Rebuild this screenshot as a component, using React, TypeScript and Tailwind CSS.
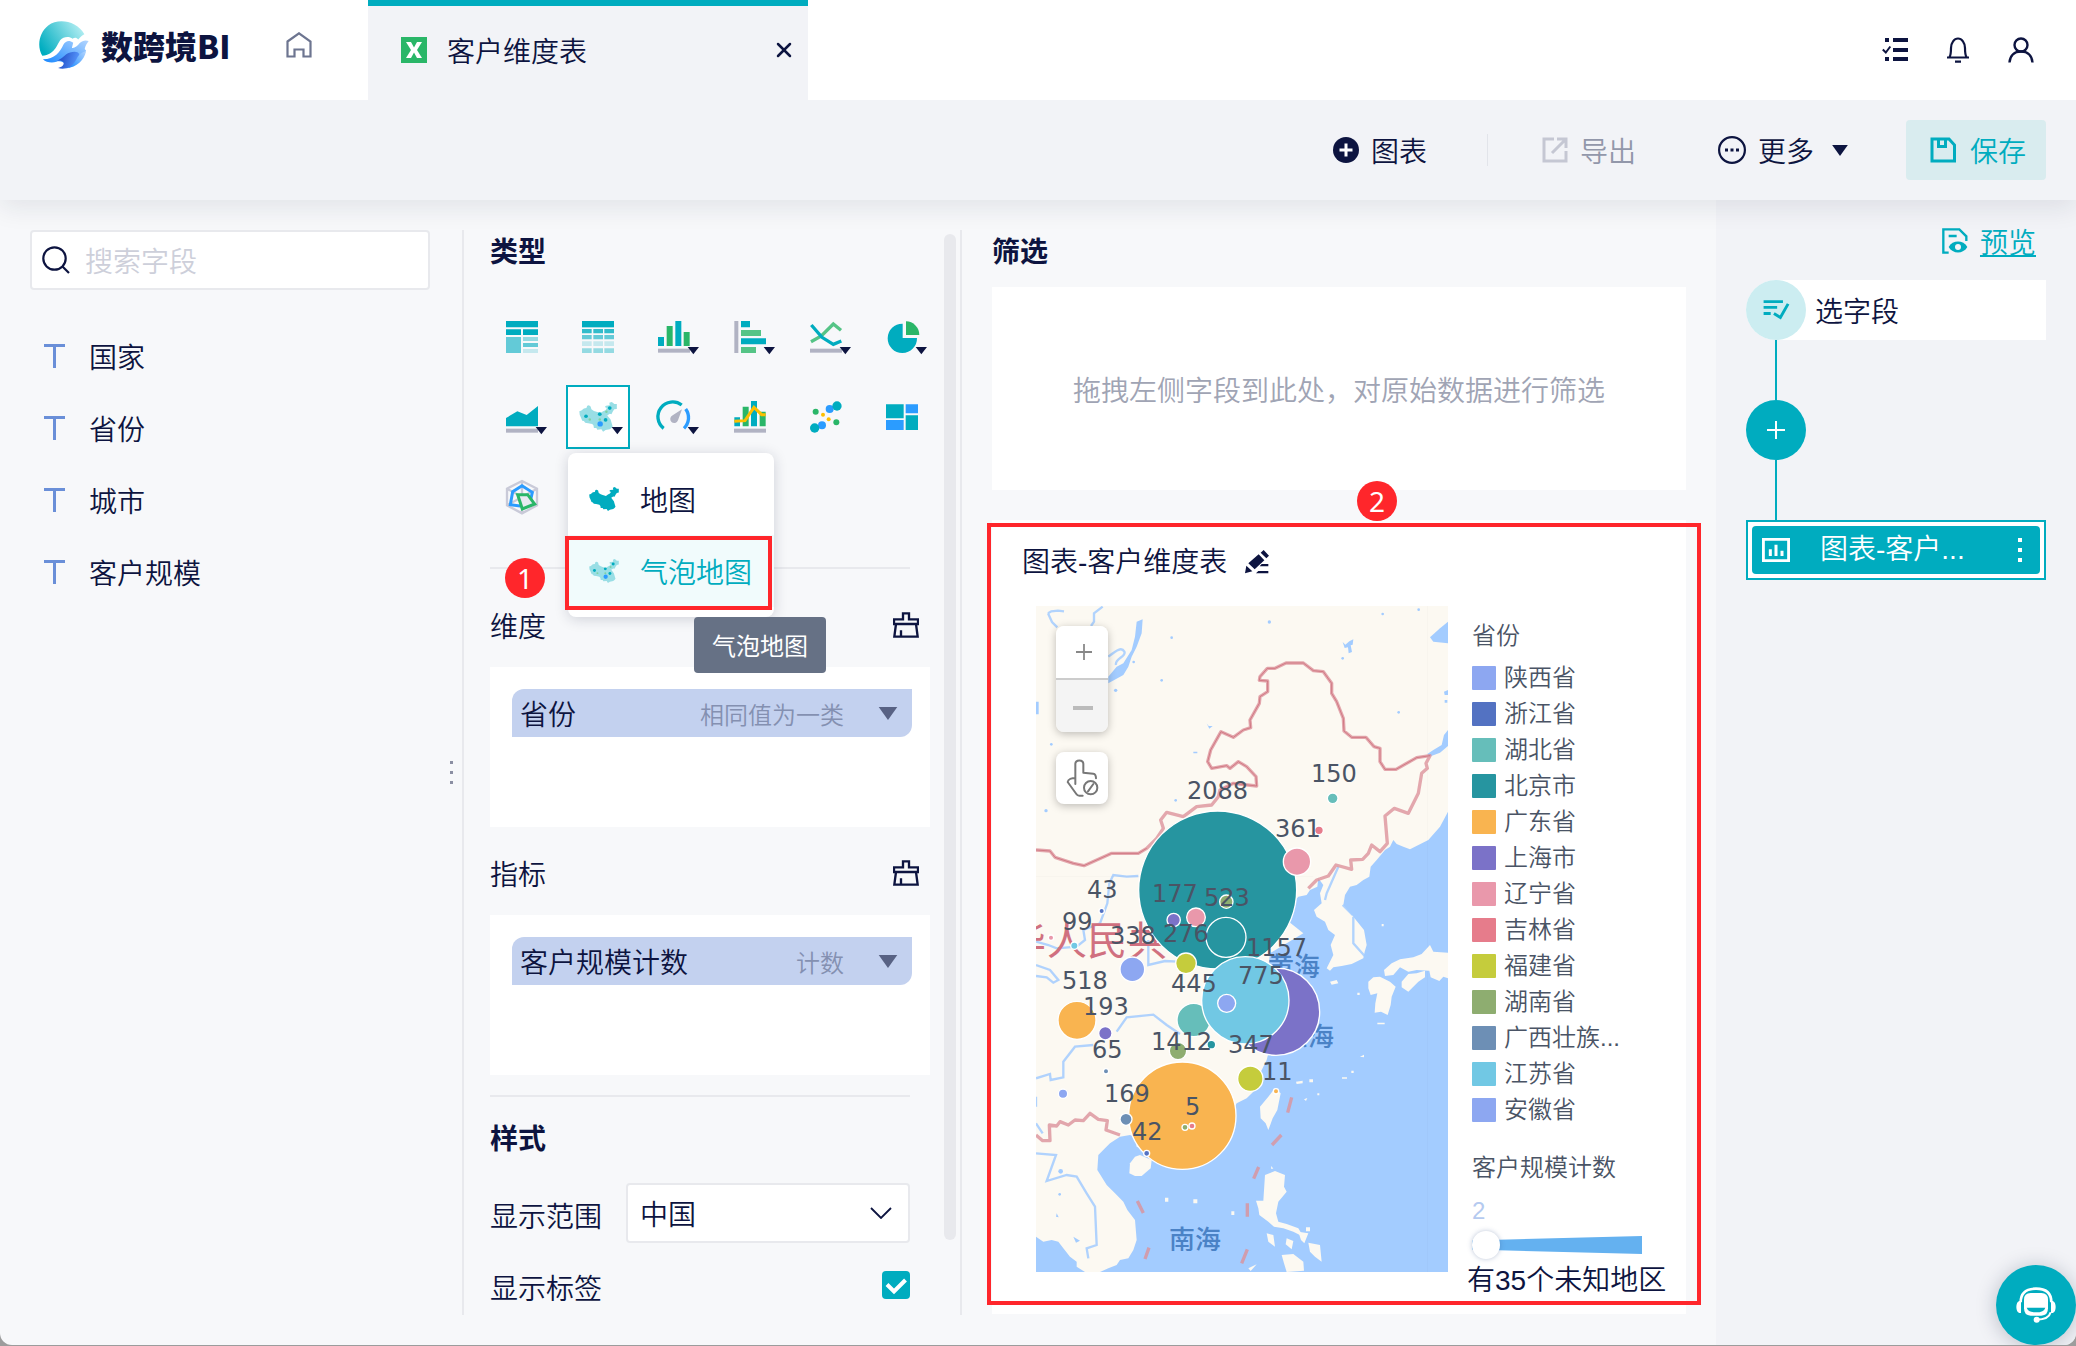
import React from 'react';
import { ChevronDown, X } from 'lucide-react';

const TEAL = '#00acbf';
const GREEN = '#2ab668';
const BLUE = '#2b9cff';
const GREY = '#b1b3c3';
const NAVY = '#0d1440';

function Logo() {
  return (
    <svg viewBox="0 0 152 146" className="h-12 w-[50px]" aria-hidden="true">
      <defs>
        <linearGradient id="globe" x1="0" y1="0.7" x2="1" y2="0.2">
          <stop offset="0" stopColor="#00adc0" />
          <stop offset="1" stopColor="#b9f0f4" />
        </linearGradient>
        <linearGradient id="wave" x1="0" y1="0.8" x2="1" y2="0">
          <stop offset="0" stopColor="#1f8bff" />
          <stop offset="1" stopColor="#b4d6ff" />
        </linearGradient>
        <linearGradient id="deep" x1="0" y1="0.4" x2="1" y2="0.6">
          <stop offset="0" stopColor="#1c45c0" />
          <stop offset="1" stopColor="#5a9bff" />
        </linearGradient>
      </defs>
      <path d="M10 106C-6 80-2 38 28 14 60-10 114 0 138 40c-8 4-13 9-19 16-4-6-11-7-17-2-8-8-28-8-37 4-12 16-16 44-55 48z" fill="url(#globe)" />
      <path d="M12 116c36 0 52-22 62-44 8-12 18-14 30-6l-4 16c8 2 16-6 24-15 8-8 18-10 27-6-6 8-10 14-12 24l4 5c-6 24-32 38-60 44-8-10-20-14-30-10-14 4-32 2-41-8z" fill="url(#wave)" />
      <path d="M82 102c14-10 36-12 40-2 6 16-12 38-38 44-10 2-18 2-26-1 12-2 20-10 16-18-4-6-14-6-20-4 12-4 20-12 28-19z" fill="url(#deep)" />
      <path d="M84 144c30-4 54-24 59-52-16 4-24 12-30 26-6 12-16 22-29 26z" fill="url(#wave)" />
    </svg>
  );
}

function HomeIcon() {
  return (
    <svg viewBox="0 0 26 26" className="size-[26px]" fill="none" stroke="#6d7590" strokeWidth="2.200" aria-hidden="true">
      <path d="M1.500 9.500 13 1.300l11.500 8.200V24.500h-7v-7h-9v7h-7z" />
    </svg>
  );
}

function TasksIcon() {
  return (
    <svg viewBox="0 0 26 26" className="size-[26px]" fill={NAVY} aria-hidden="true">
      <path d="M3 1h4v4H3zM3 20h4v4H3zM11 1h15v4H11zM11 11h15v4H11zM11 20h15v4H11z" />
      <path d="m.8 12.500 3 3 4.500-6" fill="none" stroke={NAVY} strokeWidth="2" />
    </svg>
  );
}

function BellIcon() {
  return (
    <svg viewBox="0 0 26 26" className="size-[26px]" fill="none" stroke={NAVY} strokeWidth="2.200" aria-hidden="true">
      <path d="M2 20.500h22M4.500 20c1.500-2 1.500-5 1.500-9a7 9.500 0 0 1 14 0c0 4 0 7 1.500 9M10 24.700h6" />
    </svg>
  );
}

function UserIcon() {
  return (
    <svg viewBox="0 0 26 26" className="size-[26px]" fill="none" stroke={NAVY} strokeWidth="2.400" aria-hidden="true">
      <circle cx="13" cy="8" r="6.500" />
      <path d="M1.500 25.500c.5-7 5-11 11.500-11s11 4 11.500 11" />
    </svg>
  );
}

function SheetIcon() {
  return (
    <svg viewBox="0 0 26 26" className="size-[26px]" aria-hidden="true">
      <rect width="26" height="26" fill={GREEN} />
      <path d="M5 5h5l3 5.500L16 5h5l-5 8 5 8h-5l-3-5.500L10 21H5l5-8z" fill="#fff" />
    </svg>
  );
}

function Caret({ className }: { className: string }) {
  return (
    <svg viewBox="0 0 20 14" className={className} fill="currentColor" aria-hidden="true">
      <path d="M0 0h20L10 14z" />
    </svg>
  );
}

const CHINA =
  'M0 23 5 21 11 16 17 15 19 9 23 8 27 11 29 18 35 22 41 24 51 27 57 23 63 20 66 15 61 12 64 9 73 8 72 2 78 0 84 5 90 5 90 17 84 18 81 22 77 30 73 29 67 33 71 38 75 43 77 50 80 60 77 64 73 67 63 69 57 73 53 67 43 68 41 64 35 64 34 58 31 54 21 52 14 51 11 47 7 46 3 36 1 32z';

function BubbleChina() {
  return (
    <>
      <path d={CHINA} fill="#99dee5" />
      <g fill={TEAL}>
        <circle cx="16" cy="35" r="4.500" />
        <circle cx="73" cy="15" r="4.500" />
        <circle cx="49" cy="30" r="4.500" />
        <circle cx="63" cy="44" r="4.500" />
      </g>
      <circle cx="50" cy="54" r="6.500" fill={BLUE} />
      <g fill="#7fd3a4">
        <circle cx="25" cy="43" r="3" />
        <circle cx="49" cy="43" r="3" />
        <circle cx="65" cy="24" r="3" />
      </g>
    </>
  );
}

const base = <rect x="48" y="131" width="96" height="12" fill={GREY} />;
const drop = <path d="M137 126h34l-17 22z" fill={NAVY} />;

const chartTypes: { name: string; art: React.ReactNode }[] = [
  {
    name: '明细表',
    art: (
      <g fill={TEAL}>
        <path d="M48 48h96v19H48zM48 73h45v17H48zM99 73h45v17H99z" />
        <path d="M48 96h45v48H48zM99 114h45v12H99z" opacity=".6" />
        <path d="M99 96h45v12H99z" opacity=".4" />
        <path d="M99 132h45v12H99z" opacity=".2" />
      </g>
    ),
  },
  {
    name: '汇总表',
    art: (
      <g fill={TEAL}>
        <path d="M48 48h96v19H48z" />
        <path d="M48 72h29v13H48zM82 72h29v13H82zM115 72h29v13h-29z" opacity=".8" />
        <path d="M48 90h29v13H48zM82 90h29v13H82zM115 90h29v13h-29z" opacity=".6" />
        <path d="M48 109h29v14H48zM82 109h29v14H82zM115 109h29v14h-29z" opacity=".2" />
        <path d="M48 130h29v14H48zM82 130h29v14H82zM115 130h29v14h-29z" opacity=".4" />
      </g>
    ),
  },
  {
    name: '柱状图',
    art: (
      <>
        <path d="M48 96h18v27H48zM100 48h18v75h-18z" fill={TEAL} />
        <path d="M74 63h18v60H74zM125 81h18v42h-18z" fill={GREEN} />
        {base}
        {drop}
      </>
    ),
  },
  {
    name: '条形图',
    art: (
      <>
        <path d="M49 48h12v96H49z" fill={GREY} />
        <path d="M69 48h27v19H69zM69 100h75v18H69z" fill={TEAL} />
        <path d="M69 75h60v18H69zM69 126h45v18H69z" fill="#55c486" />
        {drop}
      </>
    ),
  },
  {
    name: '折线图',
    art: (
      <>
        <g fill="none" strokeWidth="10">
          <path d="M51 110 82 93 118 57 141 76" stroke="#55c486" />
          <path d="M52 60 84 97 118 118 142 108" stroke={TEAL} />
        </g>
        {base}
        {drop}
      </>
    ),
  },
  {
    name: '饼图',
    art: (
      <>
        <path d="M98 56a44 44 0 1 0 43 43H98z" fill={TEAL} />
        <path d="M108 49v41h40a41 41 0 0 0-40-41z" fill={GREEN} />
        {drop}
      </>
    ),
  },
  {
    name: '面积图',
    art: (
      <>
        <path d="M48 124V99l34-20 28 11 34-27v61z" fill={TEAL} />
        {base}
        {drop}
      </>
    ),
  },
  {
    name: '地图',
    art: (
      <>
        <g transform="translate(40 51) scale(1.250 1.220)">
          <BubbleChina />
        </g>
        {drop}
      </>
    ),
  },
  {
    name: '仪表盘',
    art: (
      <>
        <g fill="none" strokeWidth="10">
          <path d="M65 130A44 44 0 0 1 119 60" stroke={TEAL} />
          <path d="M131 72A44 44 0 0 1 126 130" stroke={BLUE} />
        </g>
        <path d="M120 73 108 106a12 12 0 1 1-16-15z" fill={GREY} />
        {drop}
      </>
    ),
  },
  {
    name: '组合图',
    art: (
      <>
        <path d="M49 97h17v27H49zM99 48h18v76H99z" fill={TEAL} />
        <path d="M74 65h18v59H74zM125 80h18v44h-18z" fill={GREEN} />
        <path d="M49 109 81 107 108 67 131 89h12" fill="none" stroke="#fdbf00" strokeWidth="9" />
        {base}
      </>
    ),
  },
  {
    name: '散点图',
    art: (
      <>
        <g fill={GREEN}>
          <circle cx="65" cy="80" r="9" />
          <circle cx="127" cy="112" r="9" />
        </g>
        <g fill="#fdbf00">
          <circle cx="87" cy="89" r="6" />
          <circle cx="104" cy="103" r="6" />
        </g>
        <g fill={BLUE}>
          <circle cx="107" cy="72" r="12" />
          <circle cx="84" cy="121" r="12" />
        </g>
        <g fill={TEAL}>
          <circle cx="129" cy="63" r="14" />
          <circle cx="62" cy="129" r="14" />
        </g>
      </>
    ),
  },
  {
    name: '矩形树图',
    art: (
      <>
        <path d="M48 58h53v42H48zM107 91h37v44h-37z" fill={TEAL} />
        <path d="M107 58h37v27h-37zM48 105h53v30H48z" fill={BLUE} />
      </>
    ),
  },
  {
    name: '雷达图',
    art: (
      <g fill="none">
        <path d="M96 48 141 71v50L96 145 51 121V71zM51 71l90 50M141 71l-90 50M96 48v97" stroke="#c9cad8" strokeWidth="7" />
        <path d="M96 62 127 82 119 116 90 123 61 119 68 80z" stroke={BLUE} strokeWidth="9" />
        <path d="M83 89h30l21 28-37 15z" fill="#e9eaf2" stroke={GREEN} strokeWidth="9" />
      </g>
    ),
  },
];

function BroomIcon() {
  return (
    <svg viewBox="0 0 78 78" className="size-[26px]" fill="none" stroke={NAVY} strokeWidth="7" aria-hidden="true">
      <path d="M30 22V4h18v18h27v14H3V22zM3 36h72M9 36 4 74h70l-5-38M24 74V55" />
    </svg>
  );
}

function FieldZone({ title, name, rule }: { title: string; name: string; rule: string }) {
  return (
    <section>
      <div className="flex h-10 items-center justify-between pr-[11px]">
        <h3>{title}</h3>
        <button type="button" aria-label={`清空${title}`}>
          <BroomIcon />
        </button>
      </div>
      <div className="mt-[22px] h-40 bg-white px-[22px] pt-[22px]">
        <button
          type="button"
          className="flex h-12 w-[400px] items-center rounded-tl-xl rounded-br-xl bg-[#c3d1ef] pr-[14px] pl-2"
        >
          <span>{name}</span>
          <span className="ml-auto pt-[2px] text-2xl text-[#8490b1]">{rule}</span>
          <Caret className="ml-[34px] h-[13px] w-5 text-[#586284]" />
        </button>
      </div>
    </section>
  );
}

const bubbles: [number, number, number, string][] = [
  [593, 30, 237, '#2695a0'],
  [487, 707, 161, '#f9b450'],
  [768, 395, 131, '#7b72c8'],
  [521, 420, 50, '#66beba'],
  [676, 361, 131, '#71c8e4'],
  [618, 172, 60, '#2695a0'],
  [171, 421, 57, '#f9b450'],
  [831, -55, 41, '#e998ab'],
  [691, 596, 38, '#c5cc3c'],
  [337, 268, 37, '#8da7f1'],
  [498, 250, 31, '#c5cc3c'],
  [528, 112, 28, '#e998ab'],
  [620, 370, 27, '#8da7f1'],
  [474, 513, 26, '#8ead70'],
  [461, 120, 20, '#7b72c8'],
  [619, 65, 20, '#8ead70'],
  [256, 460, 20, '#7b72c8'],
  [318, 718, 18, '#6d8fb5'],
  [938, -245, 16, '#66beba'],
  [129, 641, 14, '#8da7f1'],
  [574, 494, 13, '#2695a0'],
  [897, -149, 13, '#e67c8b'],
  [163, 197, 11, '#71c8e4'],
  [245, 93, 8, '#5372c2'],
  [768, 634, 8, '#f9b450'],
  [93, 173, 8, '#e998ab'],
  [258, 574, 8, '#6d8fb5'],
  [380, 820, 9, '#5372c2'],
  [495, 742, 9, '#8ead70'],
  [516, 738, 9, '#e67c8b'],
];

const bubbleLabels: [number, number, string][] = [
  [151, 193, '2088'],
  [275, 176, '150'],
  [239, 231, '361'],
  [51, 292, '43'],
  [116, 296, '177'],
  [168, 300, '523'],
  [26, 324, '99'],
  [74, 338, '338'],
  [127, 336, '276'],
  [210, 350, '1157'],
  [202, 378, '775'],
  [26, 383, '518'],
  [47, 409, '193'],
  [135, 386, '445'],
  [115, 444, '1412'],
  [192, 447, '347'],
  [56, 452, '65'],
  [226, 474, '11'],
  [68, 496, '169'],
  [149, 509, '5'],
  [96, 534, '42'],
];

function BubbleMap() {
  return (
    <svg viewBox="0 0 412 666" preserveAspectRatio="xMidYMid slice" className="h-[666px] w-full font-normal" role="img" aria-label="气泡地图">
      <rect width="412" height="666" fill="#fcf9f2" />
      <g transform="scale(.333333) translate(-48 822)">
        <g fill="#a3ccff">
          <path d="M1284-205 1260-160 1225-120 1170-92 1150-100 1130-108 1120-120 1110-100 1095-90 1070-60 1052-40 1048-10 1030 0 1010 15 990 20 975 45 970 75 1000 110 1032 150 1040 195 1034 215 1030 235 995 252 965 258 940 262 930 272 920 265 940 225 932 195 945 165 925 150 915 125 890 110 882 90 905 70 900 40 910 15 895 -5 892 20 870 30 860 45 835 50 800 90 800 120 850 160 800 190 750 220 740 300 780 400 750 500 740 540 730 560 715 590 700 635 680 655 650 670 600 760 480 850 350 800 345 770 330 765 300 770 270 790 255 805 235 825 232 870 260 915 285 940 310 965 322 990 345 1020 350 1080 340 1110 325 1135 300 1140 290 1155 265 1165 240 1176H1284z" />
          <path d="M48 1070 70 1085 95 1080 115 1085 130 1105 150 1130 170 1145 170 1160 195 1176H48z" />
          <path d="M1284-775 1260-755 1230-728 1240-715 1284-710z" />
          <path d="M350-775 368-782 365-740 350-700 335-670 325-640 310-615 265-590 265-610 290-640 310-650 335-690 345-730z" />
          <path d="M1284-450 1272-435 1265-405 1240-390 1222-378 1228-370 1260-382 1284-402z" />
          <path d="M968-714 976-706 988-716 1000-722 998-706 992-704 996-684 986-680 984-698 974-696zM560-470 566-462 578-462 568-454zM520-385h12v5h-12zM48-535h8v38h-8zM1272-565l12-5v15h-10zM1274-540h8v8h-8zM110 1000l6 12-8-2zM160 1070l20 12-12 6z" />
          <g>
            <circle cx="455" cy="-727" r="4" />
            <circle cx="748" cy="-774" r="5" />
            <circle cx="1088" cy="-798" r="4" />
            <circle cx="1196" cy="-811" r="4" />
            <circle cx="425" cy="-599" r="4" />
            <circle cx="341" cy="-654" r="4" />
            <circle cx="287" cy="-569" r="5" />
            <circle cx="94" cy="-407" r="4" />
            <circle cx="78" cy="-208" r="5" />
            <circle cx="467" cy="-239" r="4" />
            <circle cx="1136" cy="-503" r="4" />
            <circle cx="968" cy="-665" r="4" />
            <circle cx="122" cy="874" r="7" />
            <circle cx="119" cy="943" r="4" />
          </g>
        </g>
        <g fill="none" stroke="#a3ccff" strokeWidth="7" opacity=".85">
          <path d="M248-820 222-800 222-775 213-762M84-800l10-6 20-2 18 2M84-800l12 26 16 16 M265-670c25-20 40-30 48-15s-30 20-25 40" />
          <path d="M355-12 320-10 280-15 268 10 262 70 240 130 190 150 195 180 170 200 110 205 85 195 48 185M48 255 90 270 115 300 100 308 80 292 48 288" />
          <path d="M290 455 320 412 400 404 440 435 480 462M385 180v75l50-12 40 2" />
          <path d="M48 595 90 582 92 600 130 592 130 545 165 500 220 495M48 820l60 5-28 78 60-18 30 5 30 50 25 40 5 115-30 10 5 30" />
          <path d="M955-40 920 40 915 60M1000 110 1000 190 1040 235M968 75l30 30" />
          <path d="M48 650v30M48 730l20 30" />
        </g>
        <path d="M1222-822V1176M48-10H880" stroke="#000" strokeOpacity=".03" strokeWidth="2" />
        <g fill="#fcf9f2">
          <path d="M330 850 345 830 360 825 395 840 392 865 365 888 345 888 328 880z" />
          <path d="M720 680 745 650 765 625 782 640 772 690 758 715 745 750 737 730 722 715z" />
          <path d="M1045 305 1060 292 1080 290 1110 305 1127 320 1115 350 1112 375 1103 405 1083 395 1064 398 1066 370 1072 340 1052 345 1045 325z" />
          <path d="M1092 270 1115 250 1140 238 1180 232 1205 222 1230 195 1240 215 1284 218V295L1270 290 1258 303 1232 292 1228 272 1190 270 1165 275 1140 262 1120 285 1095 288z" />
          <path d="M1145 305 1165 282 1190 280 1215 272 1215 292 1195 305 1165 335 1145 322z" />
          <path d="M735 885 765 873 795 885 792 920 800 935 775 965 768 1000 775 1025 800 1032 835 1045 850 1070 820 1055 790 1045 762 1040 745 1025 718 1005 715 985 708 962 730 962z" />
          <path d="M740 1060 760 1065 765 1100 745 1085zM785 1125 820 1122 850 1145 852 1172 800 1176 792 1150zM865 1088 900 1095 905 1145 885 1130 870 1115zM800 1075l20 8-5 25-18-15zM835 1055l30 5-12 30-10-10zM685 1165l25-12-18 20zM930 305l20-5 5 10-20 4z" />
          <path d="M828 605l20-3v8l-18 2zM868 598h11v9h-11zM852 658l10-4-4 9zM892 640h6v6h-6zM966 592h15v4h-15zM994 572h7v7h-7zM1020 530l12-6v8zM1085 132h6v7h-6zM1072 428h22v5h-22zM1012 338h7v7h-7zM435 953h10v12h-10zM520 958h12v12h-12zM634 994h9v11h-9zM754 858l6 8h-7zM858 1042h12v12h-12z" />
        </g>
        <g fill="none" stroke="#dc929b" strokeWidth="10" strokeLinejoin="round" opacity=".8">
          <path d="M48-90 90-87 105-68 160-50 192-43 275-80 355-80 380-95 410-125 430-155 422-180 440-203 490-190 530-220 575-225 595-250 600-270 640-290 710-282 708-310 680-340 655-355 630-335 620-343 575-335 563-355 572-390 603-445 640-428 670-450 692-457 690-480 718-530 720-550 743-565 743-597 718-599 720-610 742-635 765-635 798-651 850-651 880-628 910-625 935-590 935-560 950-535 970-485 972-447 995-428 1038-428 1062-400 1080-395 1080-355 1095-332 1128-332 1190-367 1230-373 1218-350 1222-335 1205-320 1195-260 1165-200 1123-215 1095-192 1102-110 1080-85 1055-105 1045-80 1028-62 992-60 995-32 948-45 925-12 890 0 865 25" />
          <path d="M48 765 68 782 90 782 88 735 110 738 120 725 145 735 165 720 190 722 210 700 235 718 262 722 258 750 300 765" />
          <path d="m815 652-12 46M784 765l-28 30M716 861l-15 35M682 970v40M682 1108l-17 42M387 1103l-12 34M352 963l18 36" />
        </g>
        <g fill="none" stroke="#c55a68" strokeWidth="3" opacity=".6">
          <path d="M48-90 90-87 105-68 160-50 192-43 275-80 355-80 380-95M600-270 640-290 710-282 708-310 680-340 655-355 630-335 620-343 575-335 563-355 572-390 603-445 640-428 670-450 692-457 690-480 718-530 720-550 743-565 743-597 718-599 720-610 742-635 765-635 798-651 850-651 880-628 910-625 935-590 935-560 950-535 970-485 972-447 995-428 1038-428 1062-400 1080-395 1080-355 1095-332 1128-332 1190-367 1230-373" />
        </g>
      </g>
      <g fill="#d0707f" fontSize="40">
        <text x="-30" y="349">华</text>
        <text x="11" y="349">人</text>
        <text x="51" y="349">民</text>
        <text x="92" y="349">共</text>
      </g>
      <g fill="#4a82c6" fontSize="26" fontWeight="500">
        <text x="232" y="370">黄海</text>
        <text x="246" y="440">东海</text>
        <text x="133" y="643">南海</text>
      </g>
      <g transform="scale(.333333) translate(-48 822)" stroke="#fff" strokeWidth="4">
        {bubbles.map(([x, y, r, c]) => (
          <circle key={`${x}-${y}`} cx={x} cy={y} r={r} fill={c} />
        ))}
      </g>
      <g fill="#4a5465" fontSize="24" fontFamily="DejaVu Sans, sans-serif">
        {bubbleLabels.map(([x, y, t]) => (
          <text key={t} x={x} y={y}>
            {t}
          </text>
        ))}
      </g>
    </svg>
  );
}

const legend: [string, string][] = [
  ['陕西省', 'bg-[#8da7f1]'],
  ['浙江省', 'bg-[#5372c2]'],
  ['湖北省', 'bg-[#66beba]'],
  ['北京市', 'bg-[#2695a0]'],
  ['广东省', 'bg-[#f9b450]'],
  ['上海市', 'bg-[#7b72c8]'],
  ['辽宁省', 'bg-[#e998ab]'],
  ['吉林省', 'bg-[#e67c8b]'],
  ['福建省', 'bg-[#c5cc3c]'],
  ['湖南省', 'bg-[#8ead70]'],
  ['广西壮族...', 'bg-[#6d8fb5]'],
  ['江苏省', 'bg-[#71c8e4]'],
  ['安徽省', 'bg-[#8da7f1]'],
];

function Header() {
  return (
    <header className="relative z-20 flex h-[100px] items-center bg-white pr-[42px]">
      <div className="flex w-[368px] items-center pb-[10px] pl-[39px]">
        <Logo />
        <span className="ml-3 text-[32px] leading-10 font-black">数跨境BI</span>
        <a href="#home" aria-label="首页" className="ml-auto mr-14">
          <HomeIcon />
        </a>
      </div>
      <div className="flex h-full w-[440px] items-center border-t-[6px] border-[#00acbf] bg-[#f2f3f7] pr-3 pb-[6px] pl-[33px]">
        <SheetIcon />
        <span className="ml-5">客户维度表</span>
        <button type="button" aria-label="关闭" className="ml-auto">
          <X className="size-6" strokeWidth={2.5} />
        </button>
      </div>
      <nav className="ml-auto flex items-center gap-[37px]">
        <button type="button" aria-label="任务"><TasksIcon /></button>
        <button type="button" aria-label="通知"><BellIcon /></button>
        <button type="button" aria-label="账户"><UserIcon /></button>
      </nav>
    </header>
  );
}

function Toolbar() {
  return (
    <div className="relative z-10 flex h-[100px] items-center justify-end bg-[#f2f3f7] pr-[30px] shadow-[0_8px_24px_rgba(20,30,60,0.09)]">
      <button type="button" className="flex items-center gap-3">
        <svg viewBox="0 0 26 26" className="size-[26px]" aria-hidden="true">
          <circle cx="13" cy="13" r="13" fill={NAVY} />
          <path d="M13 6.500v13M6.500 13h13" stroke="#fff" strokeWidth="3" />
        </svg>
        图表
      </button>
      <span className="ml-[60px] h-8 w-px bg-[#e2e4ea]" />
      <button type="button" className="ml-[54px] flex items-center gap-3 text-[#9297aa]">
        <svg viewBox="0 0 26 26" className="size-[26px]" fill="none" stroke="#c5c7d3" strokeWidth="3" aria-hidden="true">
          <path d="M12 2H2v22h22V14M15 2h9v9M24 2 10 16" />
        </svg>
        导出
      </button>
      <button type="button" className="ml-[82px] flex items-center">
        <svg viewBox="0 0 28 28" className="size-7" aria-hidden="true">
          <circle cx="14" cy="14" r="12.900" fill="none" stroke={NAVY} strokeWidth="2.200" />
          <path d="M7 12.500h3v3H7zM12.500 12.500h3v3h-3zM18 12.500h3v3h-3z" fill={NAVY} />
        </svg>
        <span className="ml-3">更多</span>
        <Caret className="ml-[18px] h-[11px] w-4" />
      </button>
      <button type="button" className="ml-[58px] flex h-[60px] items-center gap-[14px] rounded bg-[#d9ecef] pr-5 pl-6 text-[#00acbf]">
        <svg viewBox="0 0 26 26" className="size-[26px]" fill="none" stroke={TEAL} strokeWidth="3" aria-hidden="true">
          <path d="M2 2h17l5.500 6v16H2zM8.500 2v7.500h7V2" />
        </svg>
        保存
      </button>
    </div>
  );
}

function FieldList() {
  return (
    <aside className="w-[462px] shrink-0 pt-[30px] pl-[30px]">
      <label className="flex h-[60px] w-[400px] items-center rounded border-2 border-[#e8e9ed] bg-white pl-[10px]">
        <svg viewBox="0 0 28 28" className="size-7" fill="none" stroke={NAVY} strokeWidth="2.200" aria-hidden="true">
          <circle cx="12.500" cy="12.500" r="11.200" />
          <path d="m20 20 7 7" />
        </svg>
        <input
          type="text"
          aria-label="搜索字段"
          placeholder="搜索字段"
          className="ml-[15px] w-80 bg-transparent outline-none placeholder:text-[#cdcfda]"
        />
      </label>
      <ul className="mt-[30px]">
        {['国家', '省份', '城市', '客户规模'].map((f) => (
          <li key={f} className="flex h-[72px] items-center pl-[14px]">
            <svg viewBox="0 0 21 24" className="h-6 w-[21px]" fill="#6a8fd8" aria-hidden="true">
              <path d="M0 0h21v3h-9v21H9V3H0z" />
            </svg>
            <span className="ml-6">{f}</span>
          </li>
        ))}
      </ul>
    </aside>
  );
}

function MapMenu() {
  return (
    <>
      <div role="menu" className="absolute top-[66px] left-0 z-20 w-[206px] rounded-lg bg-white py-[10px] shadow-[0_2px_14px_rgba(20,30,60,0.18)]">
        <button type="button" role="menuitem" className="flex h-[72px] w-full items-center pl-[21px]">
          <svg viewBox="0 0 90 73" className="h-6 w-[30px]" aria-hidden="true">
            <path d={CHINA} fill={TEAL} />
          </svg>
          <span className="ml-[21px]">地图</span>
        </button>
        <button type="button" role="menuitem" className="relative flex h-[72px] w-full items-center bg-[#f1fbfc] pl-[21px] text-[#00acbf]">
          <svg viewBox="0 0 90 73" className="h-6 w-[30px]" aria-hidden="true">
            <BubbleChina />
          </svg>
          <span className="ml-[21px]">气泡地图</span>
          <span className="absolute top-px right-[2px] -bottom-[3px] -left-[3px] border-4 border-[#ff262b]" />
        </button>
      </div>
      <span className="absolute top-[171px] -left-[63px] z-20 flex size-10 items-center justify-center rounded-full bg-[#ff262b] font-normal text-white [font-family:'Noto_Sans',sans-serif]">1</span>
      <span role="tooltip" className="absolute top-[230px] left-[126px] z-20 flex h-14 w-[132px] items-center justify-center rounded bg-[#667185] text-2xl font-normal whitespace-nowrap text-white">
        气泡地图
      </span>
    </>
  );
}

function Settings() {
  return (
    <section className="mt-[30px] mb-[30px] flex w-[498px] shrink-0 border-l-2 border-[#e8e9ed] pl-[26px]">
      <div className="w-[440px]">
        <h2 className="leading-10 font-bold">类型</h2>
        <div className="mt-[35px] grid w-[444px] grid-cols-6 gap-x-3 gap-y-4">
          {chartTypes.map(({ name, art }) => {
            const active = name === '地图';
            return (
              <div key={name} className={active ? 'relative size-16 border-2 border-[#00acbf] bg-white' : 'size-16'}>
                <button type="button" aria-label={name} className={active ? '-m-[2px] block size-16' : 'block size-16'}>
                  <svg viewBox="0 0 192 192" className="size-16" aria-hidden="true">
                    {art}
                  </svg>
                </button>
                {active && <MapMenu />}
              </div>
            );
          })}
        </div>
        <hr className="mt-[38px] mb-9 w-[420px] border-t-2 border-[#e8e9ed]" />
        <FieldZone title="维度" name="省份" rule="相同值为一类" />
        <div className="h-[26px]" />
        <FieldZone title="指标" name="客户规模计数" rule="计数" />
        <hr className="my-5 w-[420px] border-t-2 border-[#e8e9ed]" />
        <h2 className="leading-10 font-bold">样式</h2>
        <div className="mt-[26px] flex h-[60px] w-[420px] items-center justify-between">
          <label htmlFor="range" className="pt-1">显示范围</label>
          <div className="relative">
            <select
              id="range"
              className="block h-[60px] w-[284px] appearance-none rounded border-2 border-[#e8e9ed] bg-white pl-3 outline-none"
            >
              <option>中国</option>
            </select>
            <svg viewBox="0 0 22 12" className="pointer-events-none absolute top-6 right-[18px] h-3 w-[22px]" fill="none" stroke={NAVY} strokeWidth="1.800" aria-hidden="true">
              <path d="m1 1 10 10L21 1" />
            </svg>
          </div>
        </div>
        <div className="mt-[22px] flex h-10 w-[420px] items-center justify-between">
          <label htmlFor="labels" className="pt-1">显示标签</label>
          <div className="relative size-7">
            <input id="labels" type="checkbox" defaultChecked className="block size-7 appearance-none rounded bg-[#00acbf]" />
            <svg viewBox="0 0 28 28" className="pointer-events-none absolute inset-0" fill="none" stroke="#fff" strokeWidth="4" aria-hidden="true">
              <path d="m5 13.500 7 7L23.500 9" />
            </svg>
          </div>
        </div>
      </div>
      <div className="mt-1 ml-[14px] h-[1006px] w-3 rounded-full bg-[#e8e9ed]" />
    </section>
  );
}

function ChartCard() {
  return (
    <article className="relative mt-[30px] bg-white pb-[17px]">
      <header className="flex h-[86px] items-center gap-[18px] pl-[30px]">
        <h3 className="[font-family:'Liberation_Sans','Noto_Sans_CJK_SC',sans-serif]">图表-客户维度表</h3>
        <button type="button" aria-label="重命名">
          <svg viewBox="0 0 72 72" className="mb-[3px] size-6" fill={NAVY} aria-hidden="true">
            <path d="M56 0 72 17 64 25 47 8zM41 13 58 31 29 58 10 40zM4 47 22 64 0 70zM50 42h20v7H44zM40 63h30v7H33z" />
          </svg>
        </button>
      </header>
      <div className="flex pl-11">
        <div className="relative h-[666px] min-w-0 flex-1">
          <BubbleMap />
          <div className="absolute top-5 left-5 flex w-[52px] flex-col overflow-hidden rounded-lg text-[#888] shadow-[0_2px_8px_rgba(0,0,0,0.25)]">
            <button type="button" aria-label="放大" className="flex h-[52px] items-center justify-center bg-white">
              <svg viewBox="0 0 18 18" className="ml-[3px] size-4" stroke="currentColor" strokeWidth="2" aria-hidden="true">
                <path d="M9 0v18M0 9h18" />
              </svg>
            </button>
            <button type="button" aria-label="缩小" className="flex h-[54px] items-center justify-center border-t-2 border-[#ccc] bg-[#f4f4f4] text-[#bbb]">
              <svg viewBox="0 0 20 18" className="mt-1 ml-[2px] h-[18px] w-5" stroke="currentColor" strokeWidth="4" aria-hidden="true">
                <path d="M0 9h20" />
              </svg>
            </button>
          </div>
          <button
            type="button"
            aria-label="禁用拖动"
            className="absolute top-[146px] left-5 flex size-[52px] items-center justify-center rounded-lg bg-white shadow-[0_2px_8px_rgba(0,0,0,0.25)]"
          >
            <svg viewBox="0 0 156 156" className="size-[52px]" fill="none" stroke="#777" strokeWidth="6" strokeLinecap="round" strokeLinejoin="round" aria-hidden="true">
              <path d="M58 96V36c0-14 24-14 24 0v26l30 3c6 1 8 6 8 14M58 78c-10 0-22 4-23 12l26 36c3 5 5 5 9 5h10" />
              <circle cx="104" cy="107" r="20" />
              <path d="m96 118 16-22" />
            </svg>
          </button>
        </div>
        <div className="ml-[19px] w-[219px] text-2xl leading-9 text-[#4a5465] [font-family:'Liberation_Sans','Noto_Sans_CJK_SC',sans-serif]">
          <div className="pt-3 pl-[5px]">
            <p>省份</p>
            <ul className="mt-[6px]">
              {legend.map(([name, colour]) => (
                <li key={name} className="flex items-center gap-2">
                  <span className={`size-6 rounded-[1px] ${colour}`} />
                  {name}
                </li>
              ))}
            </ul>
            <label htmlFor="count" className="mt-[22px] block">客户规模计数</label>
            <p className="mt-[7px] text-[#b5caf0]">2</p>
            <div className="relative mt-[2px] h-7 w-[170px]">
              <div className="absolute inset-x-0 top-[5px] h-[18px] bg-[#64b1f0] [clip-path:polygon(0_25%,100%_0,100%_100%,0_75%)]" />
              <input
                id="count"
                type="range"
                defaultValue={0}
                className="absolute inset-0 w-full appearance-none bg-transparent [&::-webkit-slider-thumb]:size-7 [&::-webkit-slider-thumb]:appearance-none [&::-webkit-slider-thumb]:rounded-full [&::-webkit-slider-thumb]:bg-white [&::-webkit-slider-thumb]:shadow-[0_0_5px_rgba(60,90,140,0.35)]"
              />
            </div>
          </div>
          <p className="mt-1 -mb-[2px] text-[28px] whitespace-nowrap text-[#0d1440]">有35个未知地区</p>
        </div>
      </div>
      <span className="pointer-events-none absolute top-[3px] -right-[15px] bottom-[9px] -left-[5px] border-4 border-[#ff262b]" />
      <span className="absolute -top-[39px] left-[365px] flex size-10 items-center justify-center rounded-full bg-[#ff262b] font-normal text-white [font-family:'Noto_Sans',sans-serif]">2</span>
    </article>
  );
}

function Flow() {
  return (
    <aside className="w-[360px] shrink-0 bg-[#f2f3f7] pt-5 pr-[30px] pl-[30px]">
      <div className="flex h-[42px] items-center justify-end gap-3 pr-[10px] text-[#00acbf]">
        <svg viewBox="0 0 78 78" className="size-[26px]" fill="none" stroke={TEAL} strokeWidth="7" aria-hidden="true">
          <path d="M20 74H4V4h48l21 21v14M20 24h24" />
          <path d="M20 57c12-22 44-22 56 0-12 22-44 22-56 0z" fill={TEAL} stroke="none" />
          <circle cx="48" cy="57" r="9" fill="#f2f3f7" stroke="none" />
        </svg>
        <a href="#preview" className="underline decoration-2 underline-offset-2">预览</a>
      </div>
      <button type="button" className="mt-[18px] flex h-[60px] w-full items-center rounded-l-full rounded-r bg-white">
        <span className="flex size-[60px] items-center justify-center rounded-full bg-[#ccedf1]">
          <svg viewBox="0 0 80 62" className="h-5 w-[27px]" fill="none" stroke={TEAL} strokeWidth="9" aria-hidden="true">
            <path d="M0 5h60M0 23h42M0 42h22M32 42 52 54 76 12" />
          </svg>
        </span>
        <span className="ml-[9px]">选字段</span>
      </button>
      <div className="ml-[29px] h-[60px] w-[2px] bg-[#00acbf]" />
      <button type="button" aria-label="添加步骤" className="flex size-[60px] items-center justify-center rounded-full bg-[#00acbf]">
        <svg viewBox="0 0 18 18" className="size-[18px]" stroke="#fff" strokeWidth="2" aria-hidden="true">
          <path d="M9 0v18M0 9h18" />
        </svg>
      </button>
      <div className="ml-[29px] h-[60px] w-[2px] bg-[#00acbf]" />
      <div className="h-[60px] border-2 border-[#00acbf] bg-white p-1">
        <button type="button" className="flex h-12 w-full items-center rounded bg-[#00acbf] pr-[17px] pl-[10px] text-white">
          <svg viewBox="0 0 84 72" className="h-6 w-7" fill="none" stroke="#fff" aria-hidden="true">
            <path d="M4 4h76v64H4z" strokeWidth="9" />
            <path d="M25 54V34M42 54V20M60 54V38" strokeWidth="9" />
          </svg>
          <span className="ml-[30px] [font-family:'Liberation_Sans','Noto_Sans_CJK_SC',sans-serif]">图表-客户...</span>
          <svg viewBox="0 0 6 26" className="ml-auto h-[26px] w-[6px]" fill="#fff" aria-hidden="true">
            <path d="M1 1h4v4H1zM1 11h4v4H1zM1 21h4v4H1z" />
          </svg>
        </button>
      </div>
    </aside>
  );
}

export default function App() {
  return (
    <div className="flex min-h-screen flex-col bg-[#9c9c9c] pb-px">
      <div className="relative flex flex-1 flex-col overflow-hidden rounded-b-xl bg-[#f7f8fa] text-[28px] leading-9 font-[350] text-[#0d1440] [font-family:'Noto_Sans_CJK_SC',sans-serif]">
        <Header />
        <Toolbar />
        <main className="flex flex-1">
          <FieldList />
          <div className="-ml-[14px] mr-[8px] w-[6px] self-center">
            <svg viewBox="0 0 6 24" className="h-6 w-[6px]" fill="#8b8fa3" aria-hidden="true">
              <path d="M2 0h3v3H2zM2 10h3v3H2zM2 20h3v3H2z" />
            </svg>
          </div>
          <Settings />
          <div className="my-[30px] w-[2px] shrink-0 bg-[#e8e9ed]" />
          <section className="min-w-0 flex-1 pt-[30px] pr-[30px] pb-[30px] pl-[30px]">
            <h2 className="leading-10 font-bold">筛选</h2>
            <div className="mt-[17px] flex h-[203px] items-center justify-center bg-white text-[#a0a4b4]">
              拖拽左侧字段到此处，对原始数据进行筛选
            </div>
            <ChartCard />
          </section>
          <Flow />
        </main>
        <button
          type="button"
          aria-label="在线客服"
          className="absolute right-0 bottom-0 z-10 flex size-20 items-center justify-center rounded-full bg-[#00acbf] shadow-[0_2px_20px_rgba(20,30,60,0.25)]"
        >
          <svg viewBox="0 0 120 108" className="h-9 w-10" aria-hidden="true">
            <path d="M14 46C14 20 28 5 60 5s46 15 46 41" fill="none" stroke="#fff" strokeWidth="8" />
            <path d="M10 42h5v36h-5C-2 76-2 44 10 42zM110 42h-5v36h5c12-2 12-34 0-36z" fill="#fff" />
            <path d="M104 76C100 92 86 98 62 98" fill="none" stroke="#fff" strokeWidth="6" />
            <circle cx="62" cy="98" r="9" fill="#fff" />
            <path d="M44 18h32q20 0 20 20v26q0 22-20 22H44Q24 86 24 64V38q0-20 20-20z" fill="#fff" />
            <path d="M32 62h56q-4 14-28 14T32 62z" fill={TEAL} />
          </svg>
        </button>
      </div>
    </div>
  );
}
